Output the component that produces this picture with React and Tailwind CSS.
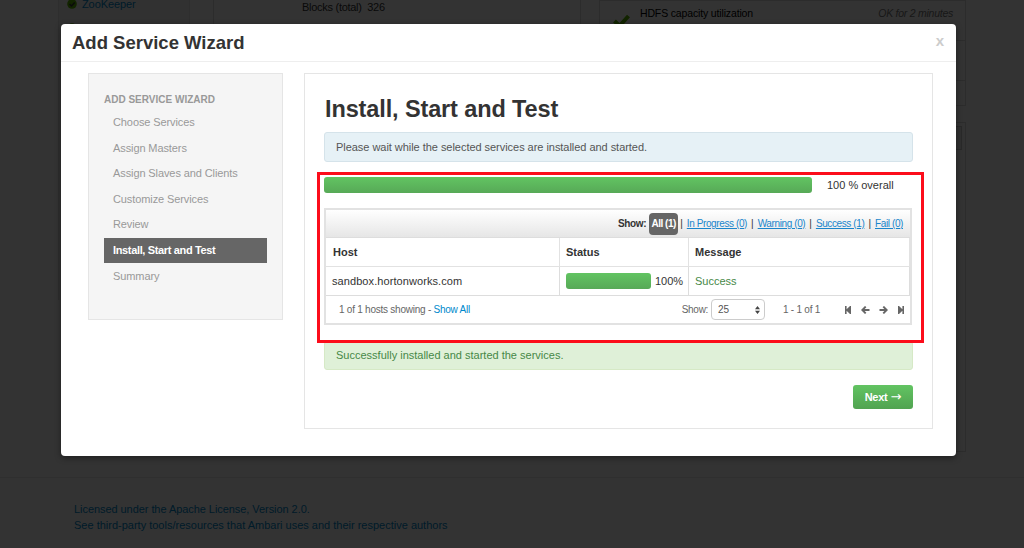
import React from 'react';

const steps = [
  'Choose Services',
  'Assign Masters',
  'Assign Slaves and Clients',
  'Customize Services',
  'Review',
  'Install, Start and Test',
  'Summary',
];

const filters = ['In Progress (0)', 'Warning (0)', 'Success (1)', 'Fail (0)'];

function OkBadge() {
  return (
    <svg className="h-[10px] w-[10px] shrink-0" viewBox="0 0 10 10">
      <circle cx="5" cy="5" r="4.8" fill="#5ab400" />
      <path d="M2.500 5l2 2 3.200-3.600" fill="none" stroke="#333" strokeWidth="1.500" />
    </svg>
  );
}

function Dashboard() {
  return (
    <div className="flex h-[548px] flex-col bg-white text-[11px] text-[#333]">
      <div className="flex h-[478px] items-start border-b border-[#eaeaea] pl-[58px]">
        <div className="h-[300px] w-[132px] border-x border-[#e3e3e3] bg-[#f5f5f5] pl-2">
          <div className="flex h-[23px] items-start gap-[5px] text-[#08c]">
            <div className="-mt-px"><OkBadge /></div>
            <span className="-mt-[3px] leading-[14px] tracking-[-0.1px]">ZooKeeper</span>
          </div>
          <OkBadge />
        </div>
        <div className="ml-[23px] h-[106px] w-[368px] border-x border-[#ddd] pl-[88px]">
          <div className="leading-[14px] tracking-[-0.28px]">Blocks (total)&nbsp; 326</div>
        </div>
        <div className="ml-[18px] w-[367px]">
          <div className="h-[106px] border-x border-b border-[#ddd]">
            <div className="flex h-[41px] items-start border-y border-[#ddd] pl-[13px] pr-[12px] pt-[4px]">
              <svg className="mt-[9px] h-[14px] w-[17px]" viewBox="0 0 17 14">
                <path d="M1.500 7l5 5L15.500 2" fill="none" stroke="#5ab400" strokeWidth="4" />
              </svg>
              <span className="ml-[10px] text-[10.5px] leading-[16px] tracking-[-0.15px] text-black">HDFS capacity utilization</span>
              <span className="ml-auto text-[10.5px] leading-[16px] tracking-[-0.25px] italic text-[#777]">OK for 2 minutes</span>
            </div>
            <div className="h-[40px] border-b border-[#ddd]" />
          </div>
          <div className="mt-[16px] h-[330px] border border-[#ddd] p-[3px]">
            <div className="h-[24px] border border-[#ccc] bg-[#f0f0f0]" />
          </div>
        </div>
      </div>
      <div className="pl-[74px] pt-[24px] leading-[15.5px] text-[#08c]">
        <div className="tracking-[-0.06px]">Licensed under the Apache License, Version 2.0.</div>
        <div>See third-party tools/resources that Ambari uses and their respective authors</div>
      </div>
    </div>
  );
}

function Sidebar() {
  return (
    <nav className="h-[247px] w-[195px] border border-[#e5e5e5] bg-[#f5f5f5] px-[15px] pt-[16px] text-[#999]">
      <div className="h-[20px] text-[10px] font-bold leading-[19px]">ADD SERVICE WIZARD</div>
      {steps.map((name, i) => (
        <div
          key={name}
          className={
            i === 5
              ? 'mb-px h-[24.600px] bg-[#666] pl-[9px] font-bold leading-[24px] tracking-[-0.35px] text-white'
              : 'mb-px h-[24.600px] pl-[9px] leading-[24px] tracking-[-0.1px]'
          }
        >
          {name}
        </div>
      ))}
    </nav>
  );
}

function PagerIcons() {
  return (
    <div className="flex items-center gap-[9px] text-[#666]">
      <svg className="h-[8px] w-[8px]" viewBox="0 0 8 8" fill="currentColor">
        <path d="M1 0h1.600v3.200L6 0h1v8H6L2.600 4.800V8H1z" />
      </svg>
      <svg className="h-[8px] w-[9px]" viewBox="0 0 9 8" fill="none" stroke="currentColor" strokeWidth="1.900">
        <path d="M8.500 4H1.500M4.700 .6L1.300 4l3.400 3.400" />
      </svg>
      <svg className="h-[8px] w-[9px]" viewBox="0 0 9 8" fill="none" stroke="currentColor" strokeWidth="1.900">
        <path d="M.5 4h7M4.300 .6L7.700 4 4.300 7.400" />
      </svg>
      <svg className="h-[8px] w-[8px]" viewBox="0 0 8 8" fill="currentColor">
        <path d="M7 0H5.400v3.200L2 0H1v8h1l3.400-3.200V8H7z" />
      </svg>
    </div>
  );
}

function HostTable() {
  return (
    <div className="mt-[15px] h-[117px] w-[588px] border-2 border-[#e2e2e2]">
      <div className="flex h-[28px] items-center justify-end border-b border-[#ddd] bg-linear-to-b from-white to-[#e6e6e6] pr-[7px] text-[10px] text-[#333]">
        <b className="tracking-[-0.35px]">Show:</b>
        <span className="ml-[3px] flex h-[22px] w-[29px] items-center justify-center rounded bg-[#666] font-bold tracking-[-0.5px] text-white">All (1)</span>
        {filters.map((f, i) => (
          <React.Fragment key={f}>
            <span className={i === 0 ? 'ml-[2px] mr-[4px]' : 'mx-[4px]'}>|</span>
            <a className="tracking-[-0.39px] text-[#1a86cc] underline">{f}</a>
          </React.Fragment>
        ))}
      </div>
      <div className="grid grid-cols-[233px_129px_1fr] text-[11px] leading-[28px] text-[#333]">
        <div className="h-[29px] border-b border-[#e2e2e2] pl-[7px] font-bold">Host</div>
        <div className="h-[29px] border-b border-l border-[#e2e2e2] pl-[6px] font-bold">Status</div>
        <div className="h-[29px] border-x border-b border-[#e2e2e2] pl-[6px] font-bold">Message</div>
        <div className="h-[29px] border-b border-[#ddd] pl-[6px] tracking-[0.08px]">sandbox.hortonworks.com</div>
        <div className="flex h-[29px] items-center gap-[4px] border-b border-l border-[#ddd] pl-[6px]">
          <div className="h-[16px] w-[85px] rounded-[3px] bg-linear-to-b from-[#62c462] to-[#57a957]" />
          <span>100%</span>
        </div>
        <div className="h-[29px] border-x border-b border-[#ddd] pl-[6px] text-[#468847]">Success</div>
      </div>
      <div className="flex h-[27px] items-center pl-[13px] pr-[5px] text-[10px] text-[#666]">
        <span className="tracking-[-0.24px]">1 of 1 hosts showing - <a className="text-[#08c]">Show All</a></span>
        <span className="ml-auto tracking-[-0.3px]">Show:</span>
        <div className="ml-[3px] flex h-[21px] w-[54px] items-center justify-between rounded border border-[#ccc] bg-white pl-[6px] pr-[4px] text-[#555]">
          <span>25</span>
          <svg className="h-[8px] w-[5px]" viewBox="0 0 5 8" fill="#444"><path d="M2.500 0L5 3.200H0zM2.500 8L5 4.800H0z" /></svg>
        </div>
        <span className="ml-[18px] mr-[24px] tracking-[-0.25px]">1 - 1 of 1</span>
        <PagerIcons />
      </div>
    </div>
  );
}

function Wizard() {
  return (
    <div className="h-[432px] w-[895px] rounded-[4px] bg-white text-[11px] shadow-[0_2px_6px_rgba(0,0,0,0.4)]">
      <header className="flex h-[38px] items-center justify-between border-b border-[#eee] pl-[11px] pr-[12px]">
        <h3 className="pt-px text-[18.500px] font-bold text-[#333]">Add Service Wizard</h3>
        <span className="-mt-[2px] text-[15px] font-bold text-[#ccc]">x</span>
      </header>
      <div className="flex gap-[21px] pl-[27px] pt-[11px]">
        <Sidebar />
        <main className="h-[356px] w-[629px] border border-[#e5e5e5] pl-[19px]">
          <h2 className="mt-[19px] h-[39px] pl-px text-[23.500px] font-bold leading-[33px] tracking-[-0.12px] text-[#333]">Install, Start and Test</h2>
          <div className="h-[30px] w-[589px] rounded-[3px] border border-[#d5e3ea] bg-[#e6f1f6] pl-[11px] leading-[28px] tracking-[-0.04px] text-[#555]">
            Please wait while the selected services are installed and started.
          </div>
          <div className="mt-[15px] flex h-[16px] items-center">
            <div className="h-[16px] w-[488px] rounded-[3px] bg-linear-to-b from-[#62c462] to-[#57a957]" />
            <span className="ml-[15px] text-[#333]">100 % overall</span>
          </div>
          <HostTable />
          <div className="mt-[16px] h-[29px] w-[589px] rounded-[3px] border border-[#d6e9c6] bg-[#dff0d8] pl-[11px] leading-[26px] text-[#468847]">
            Successfully installed and started the services.
          </div>
          <button className="ml-[529px] mt-[15px] flex h-[24px] w-[60px] items-center justify-center gap-[3px] rounded-[3px] bg-linear-to-b from-[#62c462] to-[#51a351] font-bold text-white">
            <span className="tracking-[-0.3px]">Next</span>
            <span className="font-['DejaVu_Sans',sans-serif] text-[13px] font-normal">→</span>
          </button>
        </main>
      </div>
    </div>
  );
}

export default function App() {
  return (
    <div className="relative h-[548px] w-[1024px] overflow-hidden font-['Liberation_Sans',Arial,sans-serif]">
      <Dashboard />
      <div className="absolute inset-0 bg-black/80 pl-[61px] pt-[24px]">
        <Wizard />
      </div>
      <div className="absolute left-[317px] top-[172px] h-[171px] w-[607px] border-[3px] border-[#fc0d1b]" />
    </div>
  );
}
